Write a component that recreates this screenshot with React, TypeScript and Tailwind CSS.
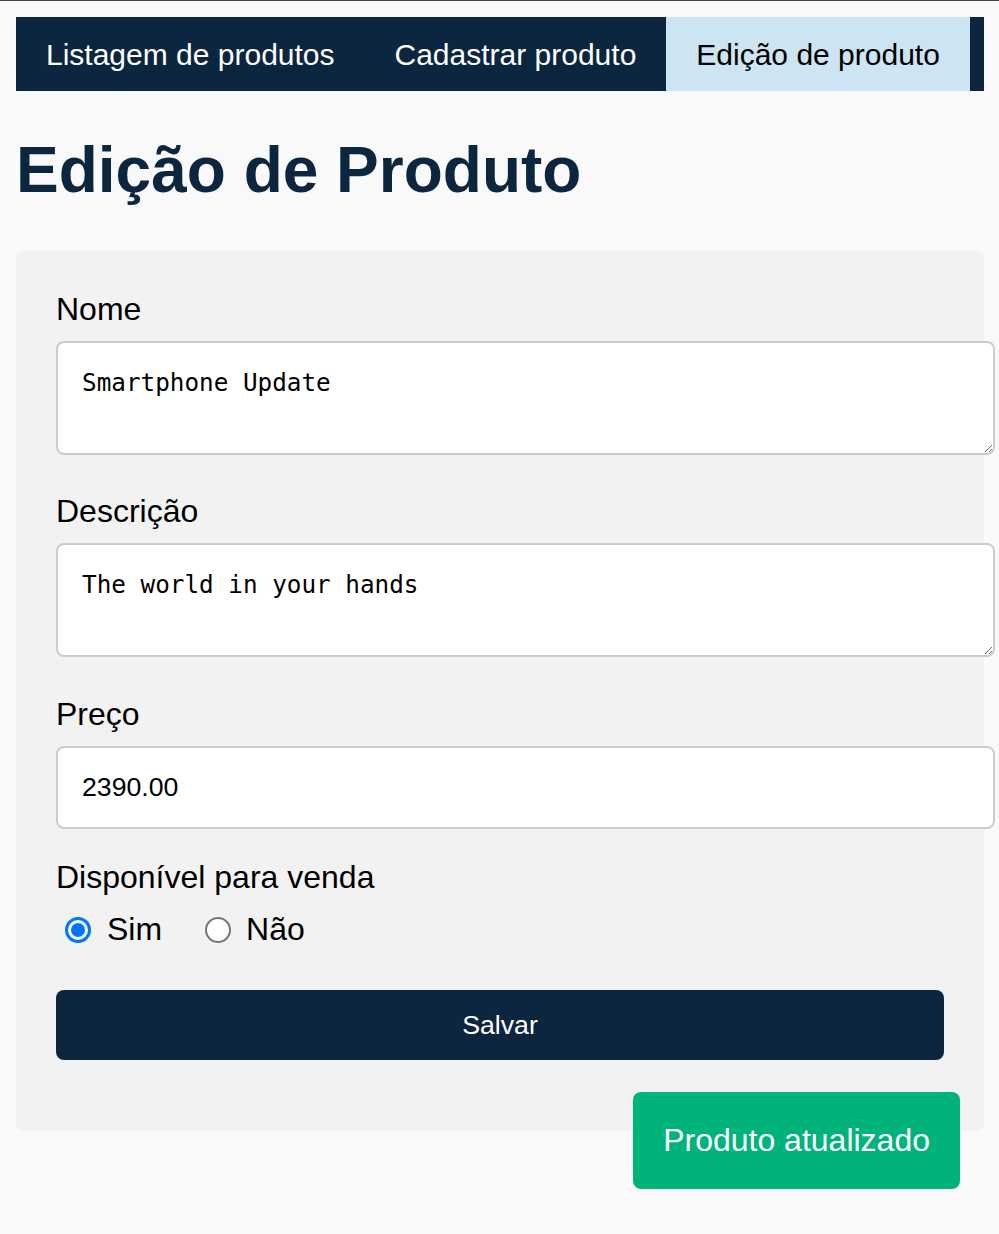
import React from "react";

const App = () => {
  const tabs = [
    { label: "Listagem de produtos", active: false },
    { label: "Cadastrar produto", active: false },
    { label: "Edição de produto", active: true },
  ];

  return (
    <div
      className="relative min-h-[1234px] bg-[#f9f9f9] border-t border-[#444444] text-black"
      style={{ fontFamily: '"Liberation Sans", Arial, sans-serif' }}
    >
      <div className="ml-4 w-[968px] pt-4">
        {/* Nav */}
        <nav className="flex h-[74px] bg-[#0c2640]">
          {tabs.map((tab) => (
            <a
              key={tab.label}
              className={
                tab.active
                  ? "flex items-center px-[30px] text-[30px] bg-[#cde4f2] text-black"
                  : "flex items-center px-[30px] text-[30px] text-white"
              }
            >
              {tab.label}
            </a>
          ))}
        </nav>

        {/* Title */}
        <h1 className="mt-[42px] text-[64px] leading-[74px] font-bold text-[#0c2640]">
          Edição de Produto
        </h1>

        {/* Form card */}
        <form className="mt-[44px] rounded-lg bg-[#f2f2f2] px-[40px] pt-[40px] pb-[71px]">
          <label className="block text-[32px] leading-[37px] mb-[13px]">Nome</label>
          <textarea
            defaultValue="Smartphone Update"
            className="block w-[939px] h-[114px] rounded-lg border-2 border-[#cccccc] bg-white px-[24px] pt-[26px] pb-[20px] text-[24.3px] leading-[28px] resize-y outline-none"
            style={{ fontFamily: '"DejaVu Sans Mono", monospace' }}
          />

          <label className="block mt-[38px] text-[32px] leading-[37px] mb-[13px]">Descrição</label>
          <textarea
            defaultValue="The world in your hands"
            className="block w-[939px] h-[114px] rounded-lg border-2 border-[#cccccc] bg-white px-[24px] pt-[26px] pb-[20px] text-[24.3px] leading-[28px] resize-y outline-none"
            style={{ fontFamily: '"DejaVu Sans Mono", monospace' }}
          />

          <label className="block mt-[39px] text-[32px] leading-[37px] mb-[13px]">Preço</label>
          <input
            type="text"
            defaultValue="2390.00"
            className="block w-[939px] h-[83px] rounded-lg border-2 border-[#cccccc] bg-white px-[24px] text-[26.67px] outline-none"
          />

          <label className="block mt-[30px] text-[32px] leading-[37px]">Disponível para venda</label>
          <div className="mt-[15px] flex items-center h-[37px] text-[32px] leading-[37px]">
            <span className="ml-[9px] flex h-[26px] w-[26px] items-center justify-center rounded-full border-[3px] border-[#0075ff] bg-white">
              <span className="h-[14px] w-[14px] rounded-full bg-[#0075ff]" />
            </span>
            <span className="ml-[16px]">Sim</span>
            <span className="ml-[43px] h-[26px] w-[26px] rounded-full border-2 border-[#767676] bg-white" />
            <span className="ml-[15px]">Não</span>
          </div>

          <button
            type="button"
            className="mt-[42px] block w-[888px] h-[70px] rounded-lg bg-[#0c2640] text-white text-[26.67px]"
          >
            Salvar
          </button>
        </form>
      </div>

      {/* Toast */}
      <div className="absolute right-[39px] top-[1091px] rounded-lg bg-[#00b37a] px-[30px] py-[30px] text-[32px] leading-[37px] text-white">
        Produto atualizado
      </div>
    </div>
  );
};

export default App;
